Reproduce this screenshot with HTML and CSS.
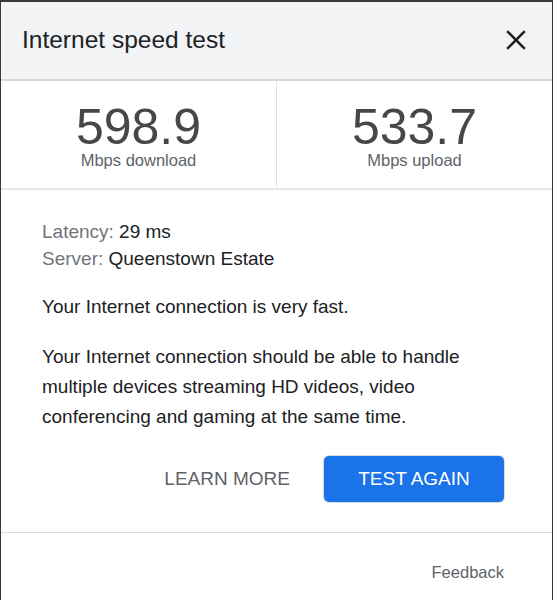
FILE: index.html
```html
<!DOCTYPE html>
<html lang="en">
<head>
<meta charset="utf-8">
<title>Internet speed test</title>
<link rel="stylesheet" href="styles.css">
</head>
<body>
<div class="dialog">
  <header class="head">
    <h1 class="title">Internet speed test</h1>
    <button class="close" aria-label="Close">
      <svg width="20" height="20" viewBox="0 0 20 20"><path d="M1.2 1.2L18.8 18.8M18.8 1.2L1.2 18.8" stroke="#202124" stroke-width="2.6" fill="none"/></svg>
    </button>
  </header>
  <section class="stats">
    <div class="stat">
      <div class="num">598.9</div>
      <div class="lbl">Mbps download</div>
    </div>
    <div class="stat">
      <div class="num">533.7</div>
      <div class="lbl">Mbps upload</div>
    </div>
  </section>
  <section class="content">
    <div class="meta">
      <div><span class="key">Latency:</span> 29 ms</div>
      <div><span class="key">Server:</span> Queenstown Estate</div>
    </div>
    <p class="msg">Your Internet connection is very fast.</p>
    <p class="msg">Your Internet connection should be able to handle multiple devices streaming HD videos, video conferencing and gaming at the same time.</p>
    <div class="actions">
      <button class="learn">LEARN MORE</button>
      <button class="again">TEST AGAIN</button>
    </div>
  </section>
  <footer class="foot">
    <a class="feedback">Feedback</a>
  </footer>
</div>
</body>
</html>
```

FILE: styles.css
```css
* { box-sizing: border-box; }
html, body { margin: 0; padding: 0; }
body {
  background: #3a3a3a;
  font-family: "Liberation Sans", Arial, sans-serif;
  height: 600px;
  overflow: hidden;
}
.dialog {
  margin: 2px 1px 0 1px;
  background: #fff;
  height: 598px;
  display: flex;
  flex-direction: column;
}
.head {
  height: 79px;
  background: #f1f3f4;
  border-bottom: 2px solid #d6d8db;
  display: flex;
  align-items: center;
  justify-content: space-between;
  padding: 0 26px 2px 21px;
}
.title {
  margin: 0;
  font-size: 24.5px;
  line-height: 28px;
  font-weight: normal;
  color: #202124;
}
.close {
  border: 0;
  background: none;
  padding: 0;
  width: 20px;
  height: 20px;
  display: flex;
}
.stats {
  display: grid;
  grid-template-columns: 275px 1fr;
  border-bottom: 2px solid #e6e7e9;
  height: 109px;
}
.stat {
  display: flex;
  flex-direction: column;
  align-items: center;
  padding-top: 23px;
}
.stat + .stat { border-left: 1px solid #e3e3e3; }
.num {
  font-size: 50px;
  line-height: 46px;
  color: #474747;
}
.lbl {
  font-size: 16.5px;
  line-height: 20px;
  color: #5f6368;
}
.content {
  padding: 28px 48px 30px 41px;
  border-bottom: 1px solid #dadce0;
  color: #202124;
  font-size: 19px;
}
.meta { line-height: 27px; }
.key { color: #70757a; }
.msg {
  margin: 20px 0 0;
  line-height: 30px;
}
.actions {
  display: flex;
  justify-content: flex-end;
  align-items: center;
  margin-top: 24px;
}
.learn {
  border: 0;
  background: none;
  font-family: inherit;
  font-size: 19px;
  color: #5f6368;
  padding: 0 16px;
  height: 46px;
  margin-right: 18px;
}
.again {
  width: 180px;
  height: 46px;
  border: 0;
  border-radius: 5px;
  background: #1a73e8;
  box-shadow: 0 0 0 1px #d8dde5;
  color: #fff;
  font-family: inherit;
  font-size: 19px;
}
.foot {
  display: flex;
  justify-content: flex-end;
  padding: 29px 48px 0 0;
}
.feedback {
  font-size: 16.5px;
  line-height: 20px;
  color: #5f6368;
}
```
